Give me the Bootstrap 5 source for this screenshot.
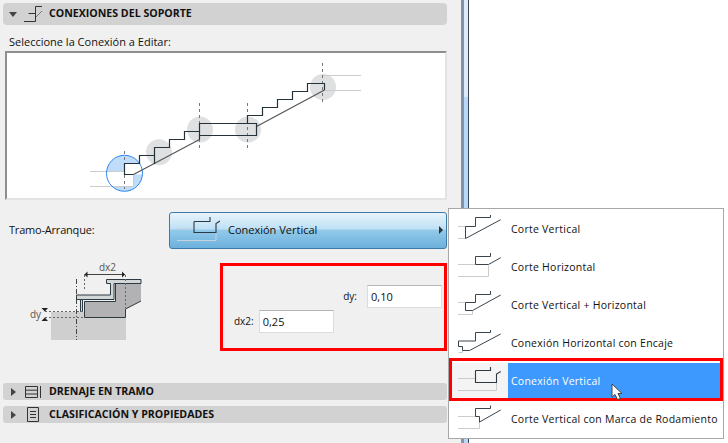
<!DOCTYPE html>
<html lang="es">
<head>
<meta charset="UTF-8">
<title>Conexiones del soporte</title>
<link href="https://cdn.jsdelivr.net/npm/bootstrap@5.3.0/dist/css/bootstrap.min.css" rel="stylesheet">
<style>
html, body { height: 443px; overflow: hidden; }
body { background: #fff; font-family: "Open Sans", "Noto Sans", sans-serif; font-size: 11px; color: #111; position: relative; }
.panel-left { width: 461px; height: 443px; background: #f0f0f0; padding: 3px 14px 0 3px; flex: none; }
.scroll-track { width: 8px; height: 443px; flex: none; background: #b8d8fb; border-left: 3px solid #8494a8; border-right: 1px solid #3c4652; }
.scroll-pale { height: 97px; background: #dcebfc; }
.sec-bar { height: 22px; background: #d2d2d2; border-radius: 4px; padding-left: 6px; font-weight: 700; font-size: 10.6px; color: #111; }
.tri-down { width: 0; height: 0; border-left: 4px solid transparent; border-right: 4px solid transparent; border-top: 5px solid #444; margin-right: 7px; }
.tri-right { width: 0; height: 0; border-top: 4px solid transparent; border-bottom: 4px solid transparent; border-left: 5px solid #444; margin-left: 2px; margin-right: 8px; }
.sec-icon { margin-right: 7px; flex: none; }
.pick-label { margin: 7px 0 0 6px; height: 19px; line-height: 19px; }
.preview { margin-left: 2px; width: 442px; height: 149px; background: #fff; border: 2px solid #8e8e8e; border-right-color: #e3e3e3; border-bottom-color: #e3e3e3; }
.preview svg { display: block; }
.tramo-row { margin-top: 12px; height: 36px; }
.tramo-label { width: 166px; padding-left: 6px; letter-spacing: -.2px; }
.tramo-btn { width: 278px; height: 37px; border: 1px solid #3f7aa6; border-radius: 3px; background: linear-gradient(#e8f4fc 0, #bfe0f5 45%, #92c9ea 50%, #6cb0dc 100%); padding: 0 3px 0 7px; }
.tramo-btn span { font-size: 11px; margin-left: 8px; padding-top: 1px; }
.tri-btn { width: 0; height: 0; border-top: 4px solid transparent; border-bottom: 4px solid transparent; border-left: 4px solid #333; margin-left: auto; }
.detail-row { height: 113px; margin-top: 2px; }
.detail-fig { width: 217px; flex: none; padding-left: 25px; padding-top: 7px; }
.fig-text { font-family: "Open Sans", sans-serif; font-size: 10px; fill: #555; }
.red-box { width: 227px; height: 88px; margin-top: 13px; border: 3px solid #f00; }
.fld { width: 75px; height: 23px; background: #fff; border: 1px solid #dcdcdc; border-top-color: #b5b5b5; padding-left: 3px; line-height: 21px; border-radius: 1px; font-size: 11px; }
.dy-line { padding: 19px 2px 0 0; }
.dx-line { padding: 2px 0 0 11px; }
.dy-line > span { margin-right: 10px; font-size: 10px; }
.dx-line > span { margin-right: 5px; font-size: 10px; }
.sec-low { height: 17px; border-radius: 3px; }
.sec-two { margin-top: 20px; }
.sec-three { margin-top: 6px; }
.pop-menu { position: absolute; left: 448px; top: 208px; width: 276px; height: 231px; background: #fff; border: 1px solid #a8a8a8; margin: 0; padding: 2px 0 0; list-style: none; }
.pop-menu li { height: 38px; padding-left: 8px; font-size: 10.5px; letter-spacing: .25px; color: #111; white-space: nowrap; }
.pop-menu li > svg { margin-right: 10px; flex: none; }
.pop-menu li.on { color: #fff; background: #3d99fd; padding-left: 0; }
.icon-chip { width: 59px; height: 100%; background: #f4f4f4; flex: none; padding-left: 8px; margin-right: 3px; }
.red-row { position: absolute; left: 449px; top: 358px; width: 274px; height: 43px; border: 3px solid #f00; }
.mouse { position: absolute; left: 611px; top: 383px; }
</style>
</head>
<body>
<div class="d-flex">
  <div class="panel-left">
    <div class="sec-bar d-flex align-items-center">
      <div class="tri-down"></div>
      <svg class="sec-icon" width="18" height="16" viewBox="0 0 18 16" fill="none" stroke="#333"><path d="M11.500 15.500V.5H18M4.500 7.500H11.500M0 15.500H11.500"/><path d="M12 11l6-6" stroke="#777"/></svg>
      CONEXIONES DEL SOPORTE
    </div>
    <div class="pick-label">Seleccione la Conexión a Editar:</div>
    <div class="preview">
      <svg width="438" height="145" viewBox="7 53 438 145" fill="none">
        <defs><clipPath id="clipCircle"><circle cx="124.500" cy="173.300" r="18"/></clipPath></defs>
        <g fill="#dfe0e1"><circle cx="159" cy="152.300" r="13"/><circle cx="200" cy="129.500" r="13"/><circle cx="248" cy="129.500" r="13"/><circle cx="323" cy="87" r="13"/></g>
        <circle cx="124.500" cy="173.300" r="18" fill="#fff"/>
        <path d="M100 148H139.500V163.500H124.500V171.500H100zM133.500 174.500H150V198H100V186.500H133.500z" fill="#bfdcfb" clip-path="url(#clipCircle)"/>
        <path d="M90 171.500H124.500M90 186.500H133.500V174.500M322.500 75.500H361M322.500 90.500H361" stroke="#ccc"/>
        <circle cx="124.500" cy="173.300" r="18" stroke="#2f86f0"/>
        <path d="M124.500 151V189M199.500 103V150M247.500 103V150M322.500 63V104" stroke="#777" stroke-dasharray="3 3"/>
        <path d="M133.500 174.500L199.500 139.500M256.500 126.500L324.500 90" stroke="#555" stroke-width="1.200"/>
        <path d="M133.500 174.500H124.500V163.500H139.500V155.500H154.500V147.500H169.500V139.500H184.500V131.500H199.500M154.500 147.500V164" stroke="#26323a" stroke-width="1.200"/>
        <path d="M199.500 139.500V123.500H256.500V135.500H199.500" stroke="#26323a" stroke-width="1.200"/>
        <path d="M247.500 123.500V115.500H262.500V107.500H277.500V99.500H292.500V91.500H307.500V83.500H324.500V90" stroke="#26323a" stroke-width="1.200"/>
      </svg>
    </div>
    <div class="tramo-row d-flex align-items-center">
      <div class="tramo-label">Tramo-Arranque:</div>
      <div class="tramo-btn d-flex align-items-center">
        <svg width="43" height="28" viewBox="0 0 43 28" fill="none"><path d="M0 12.500H17M0 24.500H39V17" stroke="#c6d3db"/><path d="M17 5.500V16.500H39V7.500L43 5M17 5.500H33V1" stroke="#2b3a44" stroke-width="1.100"/></svg>
        <span>Conexión Vertical</span>
        <div class="tri-btn"></div>
      </div>
    </div>
    <div class="detail-row d-flex">
      <div class="detail-fig">
        <svg width="116" height="95" viewBox="28 257 116 95" fill="none">
          <path d="M51 312H126V340H51z" fill="#cfcfcf"/>
          <path d="M84.500 301.500H115V283.500H141V301L125.500 309V317.500H84.500z" fill="#b2b1b3"/>
          <path d="M141 283.500H115.500V301.500H84.500V317.500H125.500V309L141 301" stroke="#2c3a42"/>
          <path d="M106.500 279.500H141V283.500H114V299.500H76.500V295H110.500V283.500H106.500z" fill="#d2d7d8" stroke="#2c3a42"/>
          <path d="M80.500 299.500H82.500V311.500H80.500z" fill="#d2d7d8" stroke="#2c3a42"/>
          <path d="M76.500 279V340" stroke="#444" stroke-dasharray="5 2 1 2"/>
          <path d="M84.500 275V291M125.500 275V308M45 311.500H84M45 317.500H84" stroke="#666" stroke-dasharray="2 2"/>
          <path d="M84.500 274.500H125" stroke="#444"/>
          <path d="M84.500 274.500l3-3v6zM125 274.500l-3-3v6z" fill="#222"/>
          <path d="M41.500 308h6.500l-3.200 3.500zM41.500 321h6.500l-3.200-3.500z" fill="#222"/>
          <text class="fig-text" x="99" y="271">dx2</text>
          <text class="fig-text" x="30" y="318">dy</text>
        </svg>
      </div>
      <div class="red-box">
        <div class="dy-line d-flex align-items-center justify-content-end"><span>dy:</span><div class="fld">0,10</div></div>
        <div class="dx-line d-flex align-items-center"><span>dx2:</span><div class="fld">0,25</div></div>
      </div>
    </div>
    <div class="sec-bar sec-low sec-two d-flex align-items-center">
      <div class="tri-right"></div>
      <svg class="sec-icon" width="18" height="14" viewBox="0 0 18 14" fill="none" stroke="#333"><path d="M1.500 1.500H13.500V12.500H1.500zM1.500 5.200H13.500M1.500 9H13.500M16.500 1V13"/></svg>
      DRENAJE EN TRAMO
    </div>
    <div class="sec-bar sec-low sec-three d-flex align-items-center">
      <div class="tri-right"></div>
      <svg class="sec-icon" width="18" height="15" viewBox="0 0 18 15" fill="none" stroke="#333"><path d="M3.500 .5H14.500V14.500H3.500zM6 4.500H12M6 7.500H12M6 10.500H12"/></svg>
      CLASIFICACIÓN Y PROPIEDADES
    </div>
  </div>
  <div class="scroll-track"><div class="scroll-pale"></div></div>
</div>

<ul class="pop-menu">
  <li class="d-flex align-items-center">
    <svg width="44" height="34" viewBox="0 0 44 34" fill="none"><path d="M1 13.500H8.500M1 25.500H8.500" stroke="#ccc"/><path d="M8.500 25.500V13.500H18.500V4.500H33.500V2M8.500 25.500L43.700 6.700" stroke="#3a444c"/></svg>
    Corte Vertical
  </li>
  <li class="d-flex align-items-center">
    <svg width="44" height="34" viewBox="0 0 44 34" fill="none"><path d="M1 13.500H18.500M1 25.500H31.500V14.500" stroke="#ccc"/><path d="M18.500 5.500V13.500H31.500L43.700 6.700M18.500 5.500H33.500V2" stroke="#3a444c"/></svg>
    Corte Horizontal
  </li>
  <li class="d-flex align-items-center">
    <svg width="44" height="34" viewBox="0 0 44 34" fill="none"><path d="M1 13.500H8.500M1 25.500H15.500V21" stroke="#ccc"/><path d="M8.500 13.500V21.500H15.500M8.500 13.500H18.500V5.500H33.500V2M15.500 21.500L43.700 6" stroke="#3a444c"/></svg>
    Corte Vertical + Horizontal
  </li>
  <li class="d-flex align-items-center">
    <svg width="44" height="34" viewBox="0 0 44 34" fill="none"><path d="M1.500 25.500H5.500V24" stroke="#ccc"/><path d="M1.500 14V19.500H5.500V23.500H12.500L43.700 7M1.500 14H18.500V5.500H33.500V3" stroke="#3a444c"/></svg>
    Conexión Horizontal con Encaje
  </li>
  <li class="on d-flex align-items-center">
    <div class="icon-chip d-flex align-items-center">
      <svg width="44" height="34" viewBox="0 0 44 34" fill="none"><path d="M1 13.500H18M1 25.500H39.500V18" stroke="#ccc"/><path d="M18.500 5.500V17.500H39.500V9L43.700 6.500M18.500 5.500H33.500V2" stroke="#2b3a44" stroke-width="1.100"/></svg>
    </div>
    Conexión Vertical
  </li>
  <li class="d-flex align-items-center">
    <svg width="44" height="34" viewBox="0 0 44 34" fill="none"><path d="M1 13.500H18.500M1 25.500H22.500V19" stroke="#ccc"/><path d="M18.500 5.500V13.500H22.500V19L43.700 7M18.500 5.500H33.500V2.500" stroke="#3a444c"/></svg>
    Corte Vertical con Marca de Rodamiento
  </li>
</ul>
<div class="red-row"></div>
<svg class="mouse" width="13" height="18" viewBox="0 0 13 18"><path d="M1 1V14L4 11.500L6.500 16.500L9.500 15.500L7 10.500H11z" fill="#fff" stroke="#444"/></svg>
</body>
</html>
